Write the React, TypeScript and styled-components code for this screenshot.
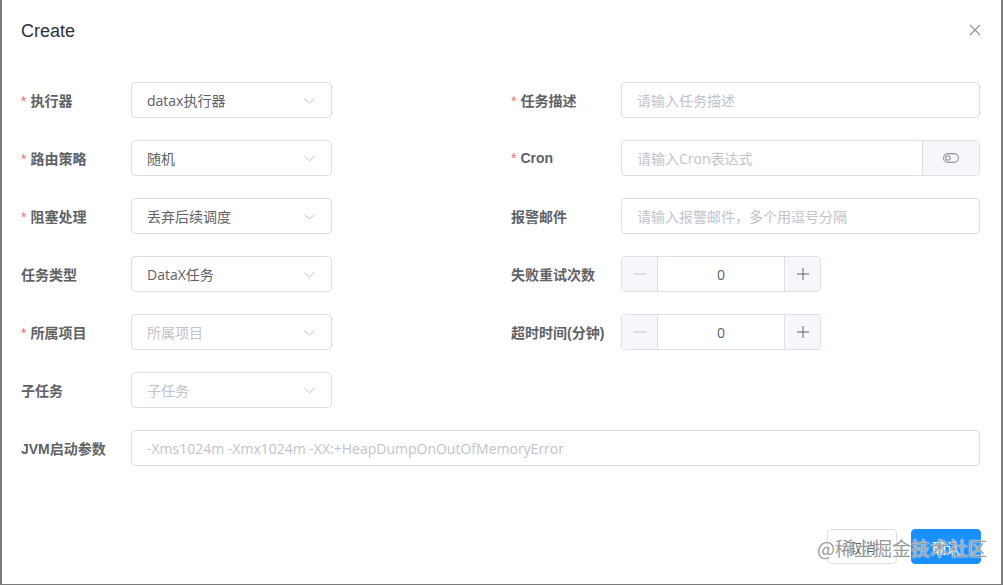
import React from "react";
import styled, { createGlobalStyle } from "styled-components";

const Global = createGlobalStyle`
  html, body { margin: 0; padding: 0; background: #7a7a7a; }
  body { font-family: "Liberation Sans", "Noto Sans CJK SC", sans-serif; }
  * { box-sizing: border-box; }
`;

const Page = styled.div`
  width: 1003px;
  height: 585px;
  padding: 0 2px 1px 2px;
  background: #7a7a7a;
`;

const Dialog = styled.div`
  position: relative;
  background: #fff;
  height: 100%;
  display: flex;
  flex-direction: column;
`;

const Header = styled.div`
  display: flex;
  justify-content: space-between;
  align-items: flex-start;
  padding: 19px 20px 0 19px;
  height: 62px;
`;

const Title = styled.span`
  font-size: 18px;
  line-height: 24px;
  color: #303133;
`;

const Close = styled.button`
  border: none;
  background: none;
  padding: 0;
  margin-top: 3px;
  margin-right: -2px;
  width: 16px;
  height: 16px;
  display: flex;
  align-items: center;
  justify-content: center;
  cursor: pointer;
`;

const Body = styled.div`
  padding: 20px 21px 0 19px;
  display: grid;
  grid-template-columns: 311px 469px;
  justify-content: space-between;
`;

const Item = styled.div<{ $full?: boolean }>`
  display: flex;
  align-items: center;
  height: 36px;
  margin-bottom: 22px;
  grid-column: ${(p) => (p.$full ? "1 / -1" : "auto")};
`;

const Label = styled.label`
  width: 110px;
  flex: none;
  font-size: 14px;
  font-weight: bold;
  color: #606266;
  white-space: nowrap;
`;

const Star = styled.span`
  color: #f56c6c;
  margin-right: 4px;
  font-weight: normal;
`;

const Box = styled.div`
  flex: 1;
  height: 36px;
  border: 1px solid #dcdfe6;
  border-radius: 4px;
  display: flex;
  align-items: center;
  padding: 0 15px;
  font-size: 14px;
  background: #fff;
`;

const Val = styled.span<{ $ph?: boolean }>`
  flex: 1;
  font-family: "Open Sans", "Noto Sans CJK SC", sans-serif;
  font-size: 14px;
  color: ${(p) => (p.$ph ? "#c0c4cc" : "#606266")};
  white-space: nowrap;
  overflow: hidden;
`;

const Group = styled.div`
  flex: 1;
  height: 36px;
  display: flex;
  border: 1px solid #dcdfe6;
  border-radius: 4px;
  overflow: hidden;
`;

const GroupInput = styled.div`
  flex: 1;
  display: flex;
  align-items: center;
  padding: 0 15px;
`;

const Append = styled.div`
  width: 57px;
  background: #f5f7fa;
  border-left: 1px solid #dcdfe6;
  display: flex;
  align-items: center;
  justify-content: center;
`;

const Num = styled.div`
  width: 200px;
  height: 36px;
  display: flex;
  border: 1px solid #dcdfe6;
  border-radius: 4px;
  overflow: hidden;
`;

const Step = styled.div<{ $side: "l" | "r" }>`
  width: 36px;
  background: #f5f7fa;
  display: flex;
  align-items: center;
  justify-content: center;
  ${(p) => (p.$side === "l" ? "border-right: 1px solid #dcdfe6;" : "border-left: 1px solid #dcdfe6;")}
`;

const NumVal = styled.div`
  flex: 1;
  display: flex;
  align-items: center;
  justify-content: center;
  font-size: 14px;
  font-family: "Open Sans", sans-serif;
  color: #606266;
`;

const Footer = styled.div`
  margin-top: auto;
  display: flex;
  justify-content: flex-end;
  gap: 14px;
  padding: 0 20px 20px 0;
`;

const Btn = styled.button<{ $primary?: boolean }>`
  height: 35px;
  padding: 0 20px;
  border-radius: 4px;
  font-size: 14px;
  font-family: "Liberation Sans", "Noto Sans CJK SC", sans-serif;
  border: 1px solid ${(p) => (p.$primary ? "#1890ff" : "#dcdfe6")};
  background: ${(p) => (p.$primary ? "#1890ff" : "#fff")};
  color: ${(p) => (p.$primary ? "#fff" : "#606266")};
`;

const Watermark = styled.div`
  position: absolute;
  right: 14px;
  bottom: 23px;
  font-size: 19px;
  color: #9a9a9a;
  font-family: "Noto Sans CJK SC", sans-serif;
  text-shadow: 0 0 2px #fff, 0 0 1px #fff;
  pointer-events: none;
`;

const Chevron = () => (
  <svg width="13" height="13" viewBox="0 0 13 13">
    <path d="M1.5 4.5 L6.5 9 L11.5 4.5" fill="none" stroke="#c0c4cc" strokeWidth="1" />
  </svg>
);

const Select = ({ value, ph }: { value: string; ph?: boolean }) => (
  <Box>
    <Val $ph={ph}>{value}</Val>
    <Chevron />
  </Box>
);

const NumberInput = () => (
  <Num>
    <Step $side="l">
      <svg width="14" height="14" viewBox="0 0 14 14">
        <path d="M1 7 H13" stroke="#c0c4cc" strokeWidth="1" />
      </svg>
    </Step>
    <NumVal>0</NumVal>
    <Step $side="r">
      <svg width="14" height="14" viewBox="0 0 14 14">
        <path d="M1 7 H13 M7 1 V13" stroke="#606266" strokeWidth="1" />
      </svg>
    </Step>
  </Num>
);

export default function App() {
  return (
    <>
      <Global />
      <Page>
        <Dialog>
          <Header>
            <Title>Create</Title>
            <Close aria-label="close">
              <svg width="12" height="12" viewBox="0 0 12 12">
                <path d="M1 1 L11 11 M11 1 L1 11" stroke="#909399" strokeWidth="1.2" />
              </svg>
            </Close>
          </Header>
          <Body>
            <Item>
              <Label><Star>*</Star>执行器</Label>
              <Select value="datax执行器" />
            </Item>
            <Item>
              <Label><Star>*</Star>任务描述</Label>
              <Box><Val $ph>请输入任务描述</Val></Box>
            </Item>
            <Item>
              <Label><Star>*</Star>路由策略</Label>
              <Select value="随机" />
            </Item>
            <Item>
              <Label><Star>*</Star>Cron</Label>
              <Group>
                <GroupInput><Val $ph>请输入Cron表达式</Val></GroupInput>
                <Append>
                  <svg width="16" height="10" viewBox="0 0 16 10">
                    <rect x="0.6" y="0.6" width="14.8" height="8.8" rx="4.4" fill="none" stroke="#909399" strokeWidth="1.1" />
                    <circle cx="5" cy="5" r="2.2" fill="none" stroke="#909399" strokeWidth="1.1" />
                  </svg>
                </Append>
              </Group>
            </Item>
            <Item>
              <Label><Star>*</Star>阻塞处理</Label>
              <Select value="丢弃后续调度" />
            </Item>
            <Item>
              <Label>报警邮件</Label>
              <Box><Val $ph>请输入报警邮件，多个用逗号分隔</Val></Box>
            </Item>
            <Item>
              <Label>任务类型</Label>
              <Select value="DataX任务" />
            </Item>
            <Item>
              <Label>失败重试次数</Label>
              <NumberInput />
            </Item>
            <Item>
              <Label><Star>*</Star>所属项目</Label>
              <Select value="所属项目" ph />
            </Item>
            <Item>
              <Label>超时时间(分钟)</Label>
              <NumberInput />
            </Item>
            <Item>
              <Label>子任务</Label>
              <Select value="子任务" ph />
            </Item>
            <Item />
            <Item $full>
              <Label>JVM启动参数</Label>
              <Box><Val $ph>-Xms1024m -Xmx1024m -XX:+HeapDumpOnOutOfMemoryError</Val></Box>
            </Item>
          </Body>
          <Footer>
            <Btn>取消</Btn>
            <Btn $primary>确认</Btn>
          </Footer>
          <Watermark>@稀土掘金技术社区</Watermark>
        </Dialog>
      </Page>
    </>
  );
}
